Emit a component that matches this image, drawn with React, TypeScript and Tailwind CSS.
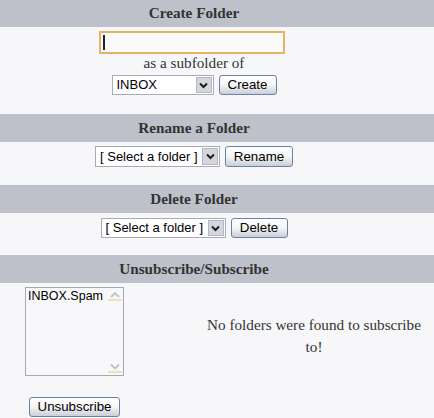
import React from "react";

/**
 * Folder management panel (create / rename / delete / subscribe)
 */

function SectionHeader({ title, tall = true }: { title: string; tall?: boolean }) {
  return (
    <div
      className={`${tall ? "h-[28px]" : "h-[27px]"} bg-[#bec1c9] flex items-center justify-center pr-[46px] font-['Liberation_Serif',serif] font-bold text-[15.2px] text-[#333]`}
    >
      {title}
    </div>
  );
}

function FakeSelect({ value, width, height }: { value: string; width: string; height: string }) {
  return (
    <div
      className={`${width} ${height} border border-[#a7adb6] bg-white flex items-stretch p-px font-['Liberation_Sans',Arial,sans-serif] text-[13px] text-black`}
    >
      <span className="flex-1 flex items-center pl-[3px] whitespace-nowrap overflow-hidden">
        {value}
      </span>
      <span className="w-[16px] border border-[#b4b9c1] bg-[#d3d6dc] flex items-center justify-center">
        <svg width="11" height="11" viewBox="0 0 11 11">
          <path d="M2 3.5 L5.5 7 L9 3.5" fill="none" stroke="#1e1e1e" strokeWidth="2" />
        </svg>
      </span>
    </div>
  );
}

function XpButton({ label, width, height }: { label: string; width: string; height: string }) {
  return (
    <button
      className={`${width} ${height} border border-[#6983a6] rounded-[3px] bg-linear-to-b from-white via-[#f5f5f5] to-[#c9ced8] flex items-center justify-center font-['Liberation_Sans',Arial,sans-serif] text-[13.3px] text-black leading-none`}
    >
      {label}
    </button>
  );
}

export default function App() {
  return (
    <div className="w-[434px] h-[418px] overflow-hidden bg-[#f7f7f9] font-['Liberation_Serif',serif] text-[#333]">
      {/* Create Folder */}
      <SectionHeader title="Create Folder" tall={false} />
      <div className="flex flex-col items-center pr-[46px]">
        <div className="mt-[4px] mr-[4px] w-[186px] h-[23px] border-2 border-[#e3b463] bg-[#fafafb] flex items-center pl-[2px]">
          <span className="w-[2px] h-[15px] bg-[#222]" />
        </div>
        <p className="text-[15.2px] leading-[18px]">as a subfolder of</p>
        <div className="mt-[3px] flex items-center gap-[5px]">
          <FakeSelect value="INBOX" width="w-[102px]" height="h-[20px]" />
          <XpButton label="Create" width="w-[58px]" height="h-[20px]" />
        </div>
      </div>

      {/* Rename */}
      <div className="mt-[19px]">
        <SectionHeader title="Rename a Folder" />
      </div>
      <div className="flex justify-center pr-[46px]">
        <div className="mt-[4px] flex items-center gap-[5px]">
          <FakeSelect value="[ Select a folder ]" width="w-[125px]" height="h-[21px]" />
          <XpButton label="Rename" width="w-[68px]" height="h-[21px]" />
        </div>
      </div>

      {/* Delete */}
      <div className="mt-[18px]">
        <SectionHeader title="Delete Folder" />
      </div>
      <div className="flex justify-center pr-[46px]">
        <div className="mt-[5px] flex items-center gap-[5px]">
          <FakeSelect value="[ Select a folder ]" width="w-[125px]" height="h-[20px]" />
          <XpButton label="Delete" width="w-[57px]" height="h-[20px]" />
        </div>
      </div>

      {/* Unsubscribe / Subscribe */}
      <div className="mt-[17px]">
        <SectionHeader title="Unsubscribe/Subscribe" />
      </div>
      <div className="flex">
        <div className="w-[149px] flex flex-col items-center">
          <div className="mt-[4px] w-[99px] h-[89px] border border-[#a5a9b0] bg-[#f8f8fa] flex">
            <span className="flex-1 min-w-0 overflow-hidden whitespace-nowrap pl-[2px] pt-[1px] font-['Liberation_Sans',Arial,sans-serif] text-[12.5px] leading-[15px] text-black">
              INBOX.Spam
            </span>
            <div className="w-[15px] shrink-0 flex flex-col justify-between py-[2px] pr-[1px]">
              <div className="h-[11px] border-b-2 border-[#f1e0b2] flex items-center justify-center">
                <svg width="12" height="9" viewBox="0 0 12 9">
                  <path d="M2 7 L6 3 L10 7" fill="none" stroke="#bfc3cb" strokeWidth="1.8" />
                </svg>
              </div>
              <div className="h-[11px] border-b-2 border-[#f1e0b2] flex items-center justify-center">
                <svg width="12" height="9" viewBox="0 0 12 9">
                  <path d="M2 2.5 L6 6.5 L10 2.5" fill="none" stroke="#bfc3cb" strokeWidth="1.8" />
                </svg>
              </div>
            </div>
          </div>
          <div className="mt-[21px]">
            <XpButton label="Unsubscribe" width="w-[91px]" height="h-[20px]" />
          </div>
        </div>
        <div className="ml-[55px] w-[220px] pt-[31px] text-center text-[15.2px] leading-[22px]">
          No folders were found to subscribe to!
        </div>
      </div>
    </div>
  );
}
